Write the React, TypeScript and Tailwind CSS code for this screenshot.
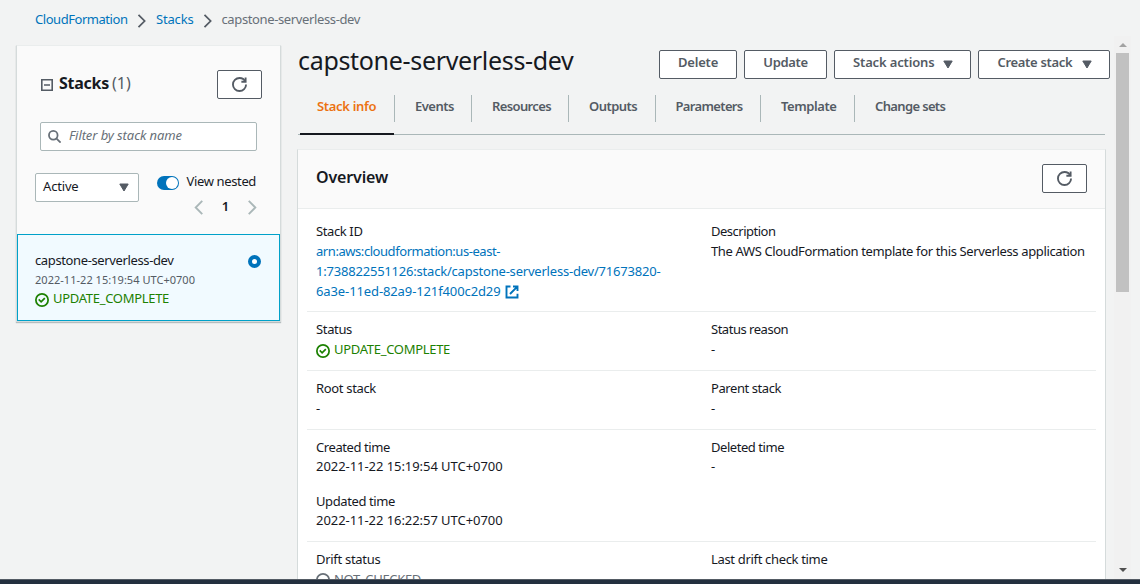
import type { ReactNode } from "react";

function RefreshIcon() {
  return (
    <svg width="15" height="15" viewBox="0 0 16 16" fill="none" stroke="#545b64" strokeWidth="2" className="mr-px">
      <path d="M10 5h4.5V.5" />
      <path d="M15 8a6.99 6.99 0 1 1-7-7 6.99 6.99 0 0 1 6.3 4" />
    </svg>
  );
}

function Caret() {
  return (
    <svg width="10" height="9" viewBox="0 0 10 9" fill="#545b64" stroke="#545b64" strokeLinejoin="round">
      <path d="M.8 1h8.4L5 8z" />
    </svg>
  );
}

function Chevron({ className, size = 15, flip = false }: { className: string; size?: number; flip?: boolean }) {
  return (
    <svg width={size} height={size} viewBox="0 0 16 16" fill="none" strokeWidth="2" className={className}>
      <path d={flip ? "M12 1 5 8l7 7" : "M4 1l7 7-7 7"} stroke="currentColor" />
    </svg>
  );
}

function CheckIcon({ offset }: { offset: string }) {
  return (
    <svg width="14" height="14" viewBox="0 0 16 16" fill="none" stroke="#1d8102" strokeWidth="2" className={`relative shrink-0 ${offset}`}>
      <circle cx="8" cy="8" r="7" />
      <path d="m5 8 2 2 3.521-3.521" strokeLinecap="square" />
    </svg>
  );
}

function Button({ className, label, caret }: { className: string; label: string; caret?: string }) {
  return (
    <button className={`flex h-[29px] shrink-0 items-center rounded-[2px] border border-[#545b64] bg-white pb-[3px] text-[13px] font-semibold text-[#545b64] ${className}`}>
      <span>{label}</span>
      {caret && <span className={`relative top-px ${caret}`}><Caret /></span>}
    </button>
  );
}

function RefreshButton({ className }: { className: string }) {
  return (
    <button aria-label="Refresh" className={`flex h-[29px] w-[45px] shrink-0 items-center justify-center rounded-[2px] border border-[#545b64] bg-white ${className}`}>
      <RefreshIcon />
    </button>
  );
}

function Section({ className, left, right }: { className: string; left: ReactNode; right: ReactNode }) {
  return (
    <div className={`mx-[9px] flex border-b border-[#eaeded] pl-[9px] ${className}`}>
      <div className="w-[395px] shrink-0">{left}</div>
      <div>{right}</div>
    </div>
  );
}

const tabs = [
  { label: "Stack info", box: "w-[97px] pl-[19px]", text: "tracking-[-0.32px] text-[#ec7211]" },
  { label: "Events", box: "w-[77px] pl-[20px]", text: "tracking-[-0.5px]" },
  { label: "Resources", box: "w-[97px] pl-[20px]", text: "tracking-[-0.62px]" },
  { label: "Outputs", box: "w-[87px] pl-[20px]", text: "tracking-[-0.53px]" },
  { label: "Parameters", box: "w-[105px] pl-[19.5px]", text: "tracking-[-0.65px]" },
  { label: "Template", box: "w-[94px] pl-[20px]", text: "tracking-[-0.42px]" },
  { label: "Change sets", box: "w-[110px] pl-[20px]", text: "tracking-[-0.64px]" },
];

function Sidebar() {
  return (
    <aside className="ml-4 mt-[5px] h-[277px] w-[265px] shrink-0 border border-[#d5dbdb] border-t-[#eaeded] bg-[#fafafa] shadow-[0_1px_1px_rgba(0,28,36,0.25)]">
      <div className="flex h-[188px] flex-col">
        <div className="mt-6 flex h-[29px] items-start pl-6 pr-[18px]">
          <svg width="12" height="12" viewBox="0 0 12 12" fill="none" stroke="#545b64" strokeWidth="1.6" className="mt-[9px]">
            <path d="M.8.8h10.4v10.4H.8zM3 6h6" />
          </svg>
          <h2 className="ml-[6px] mt-px text-[16px] leading-[25px] tracking-[-0.26px] text-[#16191f]">
            <b>Stacks</b><span className="ml-[3px] tracking-normal text-[#545b64]">(1)</span>
          </h2>
          <RefreshButton className="ml-auto" />
        </div>
        <div className="ml-[23px] mt-[23px] flex h-[29px] w-[217px] items-center rounded-[2px] border border-[#aab7b8] bg-white pl-[7px]">
          <svg width="13" height="13" viewBox="0 0 16 16" fill="none" stroke="#687078" strokeWidth="2.2">
            <circle cx="6.5" cy="6.5" r="5.3" />
            <path d="m10.5 10.5 5 5" />
          </svg>
          <span className="relative -top-px ml-[8px] text-[13px] italic tracking-[-0.089px] text-[#687078]">Filter by stack name</span>
        </div>
        <div className="mt-[22px] flex pl-[18px] pr-[20px]">
          <div className="flex h-[29px] w-[104px] items-center justify-between rounded-[2px] border border-[#aab7b8] bg-white pl-[7px] pr-[9px]">
            <span className="relative -top-px text-[13px] tracking-[-0.172px] text-[#16191f]">Active</span>
            <Caret />
          </div>
          <div className="ml-[18px]">
            <div className="flex h-[18px] items-center">
              <span className="mt-[2px] flex h-[14px] w-[22px] items-center justify-end rounded-full bg-[#0073bb] pr-px">
                <span className="size-[12px] rounded-full bg-white" />
              </span>
              <span className="ml-[7.5px] whitespace-nowrap text-[13px] tracking-[-0.358px] text-[#16191f]">View nested</span>
            </div>
            <div className="ml-[34px] mt-[7px] flex h-[18px] w-[69px] items-center justify-between">
              <Chevron flip className="text-[#aab7b8]" />
              <span className="text-[13px] font-semibold text-[#16191f]">1</span>
              <Chevron className="text-[#aab7b8]" />
            </div>
          </div>
        </div>
      </div>
      <div className="flex h-[87px] justify-between border border-[#00a1c9] bg-[#f1faff] pl-[17px] pr-[18px] pt-[15px]">
        <div>
          <div className="text-[13px] leading-5 tracking-[-0.374px] text-[#16191f]">capstone-serverless-dev</div>
          <div className="mt-px text-[11px] leading-[18px] tracking-[0.031px] text-[#545b64]">2022-11-22 15:19:54 UTC+0700</div>
          <div className="flex h-5 items-center gap-1 text-[13px] tracking-[-0.299px] text-[#1d8102]"><CheckIcon offset="top-px" />UPDATE_COMPLETE</div>
        </div>
        <span className="mt-[5px] size-[13px] rounded-full border-4 border-[#0073bb] bg-white" />
      </div>
    </aside>
  );
}

function Overview() {
  return (
    <section className="mt-[14px] h-[460px] w-[809px] border border-[#d5dbdb] border-t-[#eaeded] bg-white text-[13px] leading-5 text-[#16191f]">
      <div className="flex h-[59px] justify-between border-b border-[#eaeded] bg-[#fafafa] pl-[18px] pr-[18px] pt-[14px]">
        <h2 className="text-[16px] font-semibold leading-[27px] tracking-[-0.15px]">Overview</h2>
        <RefreshButton className="" />
      </div>
      <Section
        className="h-[103px] pt-[12px]"
        left={
          <>
            <div className="tracking-[-0.387px]">Stack ID</div>
            <div className="text-[#0073bb]">
              <div className="tracking-[-0.44px]">arn:aws:cloudformation:us-east-</div>
              <div className="tracking-[-0.204px]">1:738822551126:stack/capstone-serverless-dev/71673820-</div>
              <div className="flex items-center tracking-[-0.11px]">
                6a3e-11ed-82a9-121f400c2d29
                <svg width="14" height="14" viewBox="0 0 14 14" fill="none" stroke="#0073bb" strokeWidth="1.9" className="relative top-px ml-1">
                  <path d="M5.5 1.5H1.5v11h11V8.8M8 1.5h4.5V6M12.3 1.7 5 9" />
                </svg>
              </div>
            </div>
          </>
        }
        right={
          <>
            <div className="tracking-[-0.496px]">Description</div>
            <div className="whitespace-nowrap tracking-[-0.366px]">The AWS CloudFormation template for this Serverless application</div>
          </>
        }
      />
      <Section
        className="h-[59px] pt-[7px]"
        left={
          <>
            <div className="tracking-[-0.346px]">Status</div>
            <div className="flex items-center gap-1 tracking-[-0.299px] text-[#1d8102]"><CheckIcon offset="top-[2px]" />UPDATE_COMPLETE</div>
          </>
        }
        right={<><div className="tracking-[-0.48px]">Status reason</div><div>-</div></>}
      />
      <Section
        className="h-[59px] pt-[7px]"
        left={<><div className="tracking-[-0.33px]">Root stack</div><div>-</div></>}
        right={<><div className="tracking-[-0.42px]">Parent stack</div><div>-</div></>}
      />
      <Section
        className="h-[112px] pt-[7px]"
        left={
          <>
            <div className="tracking-[-0.408px]">Created time</div>
            <div className="-mt-px tracking-[-0.055px]">2022-11-22 15:19:54 UTC+0700</div>
            <div className="mt-[15px] tracking-[-0.395px]">Updated time</div>
            <div className="-mt-px tracking-[-0.055px]">2022-11-22 16:22:57 UTC+0700</div>
          </>
        }
        right={<><div className="tracking-[-0.45px]">Deleted time</div><div className="-mt-px">-</div></>}
      />
      <Section
        className="h-[66px] pt-[7px]"
        left={
          <>
            <div className="tracking-[-0.3px]">Drift status</div>
            <div className="flex items-center gap-1 tracking-[-0.337px] text-[#687078]">
              <svg width="14" height="14" viewBox="0 0 16 16" fill="none" stroke="#687078" strokeWidth="2" className="relative top-px">
                <circle cx="8" cy="8" r="7" />
                <path d="M5 8h6" />
              </svg>
              NOT_CHECKED
            </div>
          </>
        }
        right={<div className="tracking-[-0.33px]">Last drift check time</div>}
      />
    </section>
  );
}

export default function App() {
  return (
    <div className="flex h-[584px] w-[1140px] flex-col overflow-hidden bg-[#f2f3f3] font-['Noto_Sans',sans-serif]">
      <div className="flex h-[579px] shrink-0 overflow-hidden">
        <div className="w-[1114px] shrink-0">
          <nav className="flex h-10 items-center pl-[35px] text-[13px]">
            <a className="tracking-[-0.453px] text-[#0073bb]">CloudFormation</a>
            <Chevron size={14} className="relative top-px ml-[7px] mr-[7.5px] text-[#545b64]" />
            <a className="tracking-[-0.174px] text-[#0073bb]">Stacks</a>
            <Chevron size={14} className="relative top-px ml-[7px] mr-[7px] text-[#545b64]" />
            <span className="tracking-[-0.374px] text-[#687078]">capstone-serverless-dev</span>
          </nav>
          <div className="flex">
            <Sidebar />
            <main className="ml-4 w-[817px] shrink-0">
              <div className="flex h-[55px] items-start pl-px">
                <h1 className="w-[361px] text-[25px] leading-[40px] tracking-[-0.321px] text-[#16191f]">capstone-serverless-dev</h1>
                <div className="mt-[10px] flex gap-[7px]">
                  <Button label="Delete" className="w-[78px] justify-center tracking-[-0.2px]" />
                  <Button label="Update" className="w-[83px] justify-center tracking-[-0.35px]" />
                  <Button label="Stack actions" className="w-[137px] pl-[18px] tracking-[-0.15px]" caret="ml-[9px]" />
                  <Button label="Create stack" className="w-[132px] pl-[18.5px] tracking-[-0.32px]" caret="ml-[10px]" />
                </div>
              </div>
              <div className="ml-px flex h-[40px] w-[807px] border-b border-[#aab7b8] text-[13px] font-semibold leading-[22px] text-[#545b64]">
                {tabs.map((tab, i) => (
                  <div key={tab.label} className={`relative h-[39px] shrink-0 whitespace-nowrap ${tab.box}`}>
                    <span className={tab.text}>{tab.label}</span>
                    {i < tabs.length - 1 && <span className="absolute right-0 top-0 h-[27px] w-px bg-[#aab7b8]" />}
                    {i === 0 && <span className="absolute bottom-0 left-[2px] right-px h-[2px] translate-y-px bg-[#16191f]" />}
                  </div>
                ))}
              </div>
              <Overview />
            </main>
          </div>
        </div>
        <div className="mt-9 flex w-[17px] flex-col items-center bg-[#f1f1f1] pt-[7px]">
          <svg width="8" height="4" viewBox="0 0 8 4" fill="#a3a3a3"><path d="M4 0l4 4H0z" /></svg>
          <div className="mt-[6px] h-[239px] w-[13px] bg-[#c1c1c1]" />
          <svg width="8" height="4" viewBox="0 0 8 4" fill="#505050" className="mb-[7px] mt-auto"><path d="M4 4l4-4H0z" /></svg>
        </div>
      </div>
      <div className="h-[5px] shrink-0 border-t border-[#545b64] bg-[#232f3e]" />
    </div>
  );
}
